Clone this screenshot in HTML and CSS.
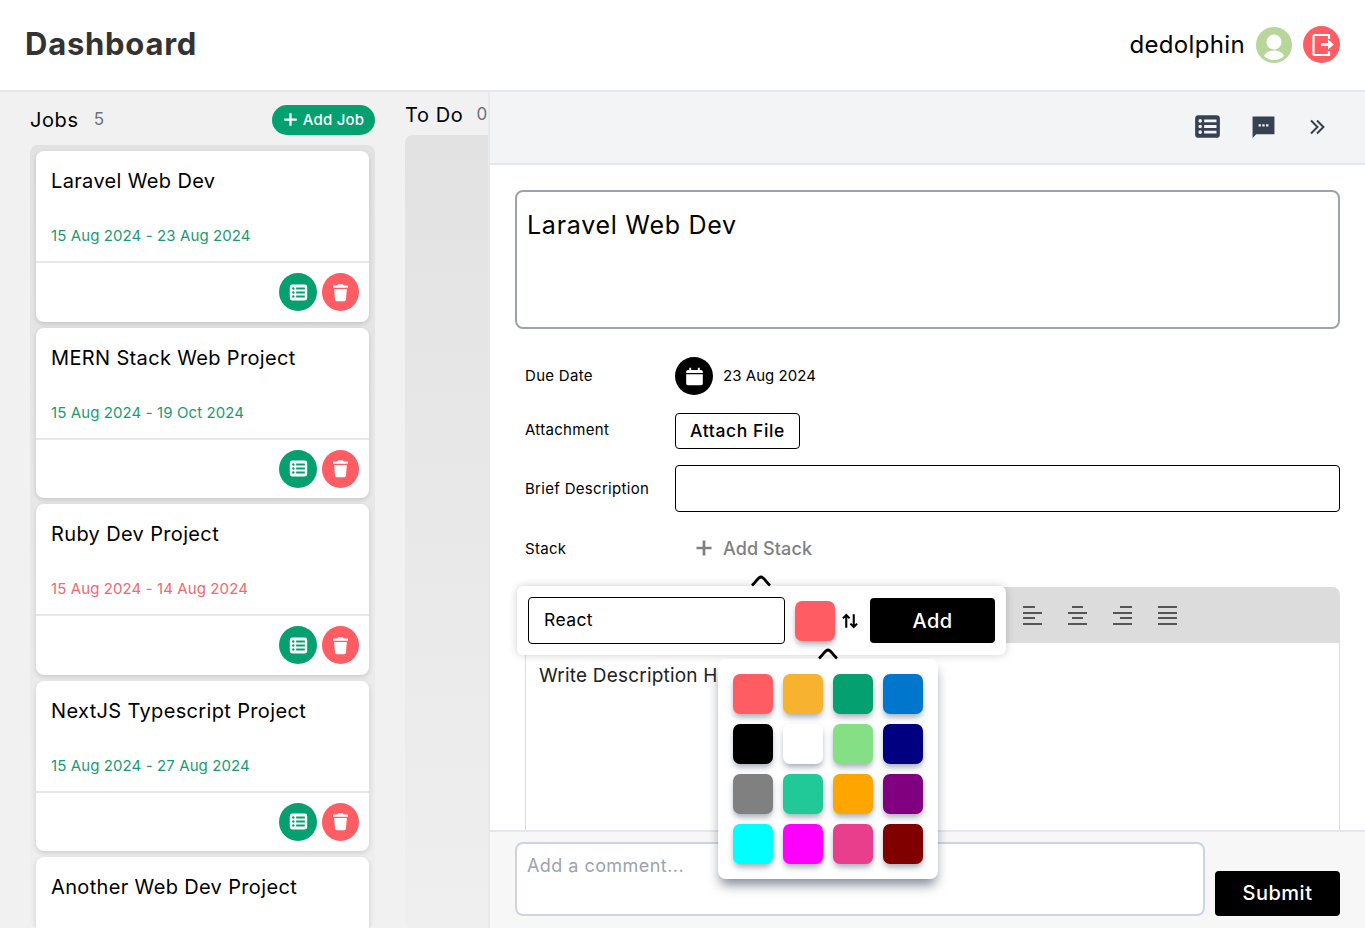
FILE: index.html
```html
<!doctype html>
<html>
  <head>
    <meta charset="utf-8">
    <title>Dashboard</title>
    <link rel="stylesheet" href="styles.css">
  </head>
  <body>
    <svg class="defs" width="0" height="0">
      <symbol id="i-list" viewBox="0 0 24 24">
        <path fill="currentColor" fill-rule="evenodd" d="M4 2h16a3 3 0 0 1 3 3v14a3 3 0 0 1-3 3H4a3 3 0 0 1-3-3V5a3 3 0 0 1 3-3z M3.900 7a1.600 1.600 0 1 0 3.200 0a1.600 1.600 0 1 0-3.200 0z M3.900 12a1.600 1.600 0 1 0 3.200 0a1.600 1.600 0 1 0-3.200 0z M3.900 17a1.600 1.600 0 1 0 3.200 0a1.600 1.600 0 1 0-3.200 0z M9 5.700h11v2.600H9z M9 10.700h11v2.600H9z M9 15.700h11v2.600H9z"/>
      </symbol>
      <symbol id="i-trash" viewBox="0 0 24 24">
        <path fill="currentColor" d="M9 1.500h6l1 1.800h5.500v2.700h-19V3.300H8z M4 7.500h16l-1.100 13.700a2 2 0 0 1-2 1.800H7.100a2 2 0 0 1-2-1.800z"/>
      </symbol>
      <symbol id="i-plus" viewBox="0 0 24 24">
        <path fill="currentColor" d="M10.200 2h3.600v8.200H22v3.600h-8.200V22h-3.600v-8.200H2v-3.600h8.200z"/>
      </symbol>
      <symbol id="i-swap" viewBox="0 0 24 24">
        <path fill="none" stroke="currentColor" stroke-width="2.800" d="M7 21V4 M2.500 8.500 7 4l4.500 4.500 M17 3v17 M12.500 15.500 17 20l4.500-4.500"/>
      </symbol>
      <symbol id="i-caret" viewBox="0 0 24 12">
        <path fill="none" stroke="#000" stroke-width="2.800" d="M3 10.500C8 6 9 2 12 2s4 4 9 8.500"/>
      </symbol>
    </svg>

    <div class="app">
      <div class="topbar">
        <div class="brand">Dashboard</div>
        <div class="user">
          <span class="user-name">dedolphin</span>
          <span class="avatar">
            <svg viewBox="0 0 36 36" width="36" height="36"><circle cx="18" cy="15" r="7.500" fill="#fff"/><path fill="#fff" d="M8 29c1.500-4 6-5.500 10-5.500s8.500 1.500 10 5.500c-2.500 2.500-6 4-10 4s-7.500-1.500-10-4z"/></svg>
          </span>
          <span class="logout">
            <svg viewBox="0 0 37 37" width="37" height="37"><path fill="none" stroke="#fff" stroke-width="2.200" d="M26 13V9H12a1.500 1.500 0 0 0-1.500 1.500v17a1.500 1.500 0 0 0 1.500 1.500h14v-4"/><path fill="#fff" d="M18 17h7v-3.500l6 5-6 5V20h-7z"/></svg>
          </span>
        </div>
      </div>

      <div class="main">
        <div class="board">
          <div class="column jobs">
            <div class="column-head">
              <span class="column-name">Jobs</span>
              <span class="column-count">5</span>
              <button class="add-job"><svg width="15" height="15"><use href="#i-plus"/></svg>Add Job</button>
            </div>
            <div class="card-list">
              <div class="card">
                <div class="card-top">
                  <div class="card-title">Laravel Web Dev</div>
                  <div class="card-date">15 Aug 2024 - 23 Aug 2024</div>
                </div>
                <div class="card-actions">
                  <span class="round green"><svg width="19" height="19"><use href="#i-list"/></svg></span>
                  <span class="round red"><svg width="19" height="19"><use href="#i-trash"/></svg></span>
                </div>
              </div>
              <div class="card">
                <div class="card-top">
                  <div class="card-title">MERN Stack Web Project</div>
                  <div class="card-date">15 Aug 2024 - 19 Oct 2024</div>
                </div>
                <div class="card-actions">
                  <span class="round green"><svg width="19" height="19"><use href="#i-list"/></svg></span>
                  <span class="round red"><svg width="19" height="19"><use href="#i-trash"/></svg></span>
                </div>
              </div>
              <div class="card">
                <div class="card-top">
                  <div class="card-title">Ruby Dev Project</div>
                  <div class="card-date late">15 Aug 2024 - 14 Aug 2024</div>
                </div>
                <div class="card-actions">
                  <span class="round green"><svg width="19" height="19"><use href="#i-list"/></svg></span>
                  <span class="round red"><svg width="19" height="19"><use href="#i-trash"/></svg></span>
                </div>
              </div>
              <div class="card">
                <div class="card-top">
                  <div class="card-title">NextJS Typescript Project</div>
                  <div class="card-date">15 Aug 2024 - 27 Aug 2024</div>
                </div>
                <div class="card-actions">
                  <span class="round green"><svg width="19" height="19"><use href="#i-list"/></svg></span>
                  <span class="round red"><svg width="19" height="19"><use href="#i-trash"/></svg></span>
                </div>
              </div>
              <div class="card">
                <div class="card-top">
                  <div class="card-title">Another Web Dev Project</div>
                </div>
              </div>
            </div>
          </div>
          <div class="column todo">
            <div class="column-head">
              <span class="column-name">To Do</span>
              <span class="column-count">0</span>
            </div>
            <div class="todo-list"></div>
          </div>
        </div>

        <div class="panel">
          <div class="panel-head">
            <svg class="tool" width="27" height="27"><use href="#i-list"/></svg>
            <svg class="tool" viewBox="0 0 24 24" width="25" height="25"><path fill="currentColor" fill-rule="evenodd" d="M1.500 2.500h21v17H5l-3.500 3.500z M7.300 9.800h2.200v2.200H7.300z M10.900 9.800h2.200v2.200h-2.200z M14.500 9.800h2.200v2.200h-2.200z"/></svg>
            <svg class="tool" viewBox="0 0 24 24" width="22" height="22"><path fill="none" stroke="currentColor" stroke-width="2.200" d="M5.500 5l7 7-7 7 M12 5l7 7-7 7"/></svg>
          </div>

          <div class="panel-body">
            <div class="title-box">Laravel Web Dev</div>
            <div class="field field-date">
              <div class="field-label">Due Date</div>
              <span class="round black">
                <svg viewBox="0 0 24 24" width="21" height="21"><path fill="#fff" d="M6 2h2.200v2.500h7.600V2H18v2.500h1.500a2 2 0 0 1 2 2V8h-19V6.500a2 2 0 0 1 2-2H6z M2.500 9.500h19V20a2 2 0 0 1-2 2h-15a2 2 0 0 1-2-2z"/></svg>
              </span>
              <span class="date-text">23 Aug 2024</span>
            </div>
            <div class="field field-attach">
              <div class="field-label">Attachment</div>
              <button class="attach">Attach File</button>
            </div>
            <div class="field field-brief">
              <div class="field-label">Brief Description</div>
              <div class="brief-input"></div>
            </div>
            <div class="field field-stack">
              <div class="field-label">Stack</div>
              <div class="add-stack"><svg width="18" height="18"><use href="#i-plus"/></svg>Add Stack</div>
            </div>
            <div class="editor">
              <div class="editor-tools">
                <svg class="align" width="20" height="20"><path d="M1 2h12M1 8h19M1 13h12M1 19h19"/></svg>
                <svg class="align" width="20" height="20"><path d="M5 2h11M1 8h19M5 13h11M1 19h19"/></svg>
                <svg class="align" width="20" height="20"><path d="M8 2h12M1 8h19M8 13h12M1 19h19"/></svg>
                <svg class="align" width="20" height="20"><path d="M1 2h19M1 8h19M1 13h19M1 19h19"/></svg>
              </div>
              <div class="editor-text">Write Description Here</div>
            </div>
          </div>

          <div class="comment-bar">
            <div class="comment-input">Add a comment...</div>
            <button class="submit">Submit</button>
          </div>

          <div class="stack-popup">
            <svg class="caret caret-stack" width="24" height="12"><use href="#i-caret"/></svg>
            <div class="stack-input">React</div>
            <span class="swatch picked"></span>
            <svg class="swap" width="18" height="18"><use href="#i-swap"/></svg>
            <button class="add">Add</button>
            <div class="color-popup">
              <svg class="caret caret-color" width="24" height="12"><use href="#i-caret"/></svg>
              <span class="swatch c1"></span>
              <span class="swatch c2"></span>
              <span class="swatch c3"></span>
              <span class="swatch c4"></span>
              <span class="swatch c5"></span>
              <span class="swatch c6"></span>
              <span class="swatch c7"></span>
              <span class="swatch c8"></span>
              <span class="swatch c9"></span>
              <span class="swatch c10"></span>
              <span class="swatch c11"></span>
              <span class="swatch c12"></span>
              <span class="swatch c13"></span>
              <span class="swatch c14"></span>
              <span class="swatch c15"></span>
              <span class="swatch c16"></span>
            </div>
          </div>
        </div>
      </div>
    </div>
  </body>
</html>
```

FILE: styles.css
```css
* {
  box-sizing: border-box;
}

body {
  margin: 0;
  background: #fff;
  color: #000;
  font-family: 'Inter', 'Open Sans', sans-serif;
}

button {
  font-family: inherit;
  border: 0;
  padding: 0;
}

.defs {
  position: absolute;
}

.app {
  height: 928px;
  display: flex;
  flex-direction: column;
}

/* top bar */

.topbar {
  height: 92px;
  flex: none;
  display: flex;
  align-items: center;
  justify-content: space-between;
  padding: 0 25px 1px;
  border-bottom: 2px solid #e5e7eb;
}

.brand {
  font-size: 31px;
  font-weight: 700;
  color: #333;
  letter-spacing: 0.75px;
  margin-bottom: 3px;
}

.user {
  display: flex;
  align-items: center;
}

.user-name {
  font-size: 24px;
  letter-spacing: 0.35px;
  margin-right: 11px;
}

.avatar,
.logout {
  border-radius: 50%;
  display: flex;
  align-items: center;
  justify-content: center;
}

.avatar {
  width: 36px;
  height: 36px;
  background: #b8d69c;
  margin-right: 11px;
}

.logout {
  width: 37px;
  height: 37px;
  background: #ff5c64;
}

/* board */

.main {
  flex: 1;
  min-height: 0;
  display: flex;
  overflow: hidden;
}

.board {
  width: 488px;
  flex: none;
  display: flex;
  background: #f1f1f1;
  padding-left: 30px;
  overflow: hidden;
}

.column {
  flex: none;
  display: flex;
  flex-direction: column;
}

.jobs {
  width: 345px;
}

.todo {
  width: 120px;
  margin-left: 30px;
}

.column-head {
  display: flex;
  align-items: center;
}

.jobs .column-head {
  height: 53px;
  padding-top: 2px;
}

.todo .column-head {
  height: 43px;
  padding-top: 3px;
}

.column-name {
  font-size: 20px;
  letter-spacing: 0.6px;
}

.column-count {
  margin-left: 15px;
  font-size: 17px;
  color: #6b7280;
  position: relative;
  top: -1px;
}

.todo .column-count {
  margin-left: 13px;
}

.add-job {
  margin-left: auto;
  width: 103px;
  height: 30px;
  border-radius: 15px;
  background: #05a06f;
  color: #fff;
  font-size: 15px;
  letter-spacing: 0.2px;
  font-weight: 500;
  display: flex;
  align-items: center;
  justify-content: center;
  gap: 5px;
}

.card-list {
  flex: 1;
  padding: 6px;
  border-radius: 8px;
  background: linear-gradient(#e2e2e2, #efefef);
  overflow: hidden;
}

.card {
  height: 170.500px;
  background: #fff;
  border-radius: 8px;
  box-shadow: 0 2px 5px rgba(0, 0, 0, 0.14);
  margin-bottom: 6px;
  display: flex;
  flex-direction: column;
}

.card-top {
  flex: none;
  height: 112px;
  padding: 17px 15px 0;
  border-bottom: 2px solid #e5e7eb;
}

.card-title {
  font-size: 20px;
  line-height: 26px;
  letter-spacing: 0.35px;
  height: 58px;
}

.card-date {
  font-size: 15px;
  line-height: 20px;
  color: #1a9a72;
  letter-spacing: 0.1px;
}

.card-date.late {
  color: #f0686e;
}

.card-actions {
  display: flex;
  justify-content: flex-end;
  gap: 5px;
  padding: 10px 10px 0;
}

.round {
  width: 38px;
  height: 38px;
  border-radius: 50%;
  color: #fff;
  flex: none;
  display: flex;
  align-items: center;
  justify-content: center;
}

.green {
  background: #05a06f;
}

.red {
  width: 37px;
  background: #ff5c64;
}

.black {
  background: #000;
}

.todo-list {
  flex: 1;
  border-radius: 8px;
  background: linear-gradient(#e2e2e2, #efefef);
}

/* side panel */

.panel {
  position: relative;
  flex: 1;
  display: flex;
  flex-direction: column;
  border-left: 2px solid #e9e9e9;
  background: #fff;
}

.panel-head {
  flex: none;
  height: 73px;
  display: flex;
  align-items: center;
  justify-content: flex-end;
  gap: 30px;
  padding: 0 37px 2px 0;
  background: #f3f4f6;
  border-bottom: 2px solid #e5e7eb;
  color: #374151;
}

.panel-body {
  flex: 1;
  min-height: 0;
  overflow: hidden;
  padding: 25px 25px 0;
}

.title-box {
  height: 139px;
  border: 2px solid #9ca3af;
  border-radius: 8px;
  padding: 16px 10px;
  font-size: 25px;
  line-height: 34px;
  letter-spacing: 0.73px;
}

.field {
  display: flex;
  align-items: center;
  padding-left: 10px;
}

.field-label {
  width: 150px;
  flex: none;
  font-size: 15px;
  line-height: 18px;
  letter-spacing: 0.3px;
}

.field-date {
  margin-top: 28px;
}

.date-text {
  margin-left: 10px;
  font-size: 15px;
  line-height: 18px;
  letter-spacing: 0.05px;
}

.field-attach {
  margin-top: 18px;
}

.field-attach .field-label {
  margin-top: -2px;
}

.attach {
  width: 125px;
  height: 36px;
  border: 1px solid #000;
  border-radius: 4px;
  background: #fff;
  color: #000;
  font-size: 17.500px;
  letter-spacing: 0.6px;
  font-weight: 500;
  padding-bottom: 2px;
}

.field-brief {
  margin-top: 16px;
}

.brief-input {
  flex: 1;
  height: 47px;
  border: 1px solid #000;
  border-radius: 4px;
}

.field-stack {
  margin-top: 23px;
  height: 28px;
}

.add-stack {
  display: flex;
  align-items: center;
  gap: 10px;
  padding: 0 0 2px 20px;
  font-size: 18px;
  letter-spacing: 0.1px;
  font-weight: 500;
  color: #808080;
}

.editor {
  margin: 24px 0 0 10px;
}

.editor-tools {
  height: 56px;
  background: #dcdcdc;
  border-radius: 8px 8px 0 0;
  display: flex;
  align-items: center;
  gap: 25px;
  padding-left: 497px;
}

.align {
  fill: none;
  stroke: #555;
  stroke-width: 2.200;
}

.editor-text {
  height: 300px;
  border: 1px solid #dcdcdc;
  border-top: 0;
  padding: 20px 13px;
  font-size: 19px;
  line-height: 26px;
  letter-spacing: 0.2px;
  color: #222;
}

.comment-bar {
  flex: none;
  height: 98px;
  display: flex;
  align-items: flex-end;
  gap: 10px;
  padding: 0 25px 12px;
  background: #f7f7f7;
  border-top: 2px solid #e5e7eb;
}

.comment-input {
  flex: 1;
  height: 74px;
  padding: 10px;
  background: #fff;
  border: 2px solid #cbd5e1;
  border-radius: 8px;
  font-size: 18px;
  letter-spacing: 0.45px;
  line-height: 24px;
  color: #9ca3af;
}

.submit {
  width: 125px;
  height: 45px;
  background: #000;
  color: #fff;
  border-radius: 4px;
  font-size: 20px;
  letter-spacing: 0.5px;
  font-weight: 500;
  padding-bottom: 2px;
}

/* popovers */

.stack-popup {
  position: absolute;
  left: 27px;
  top: 494px;
  width: 489px;
  height: 69px;
  background: #fff;
  border-radius: 6px;
  box-shadow: 0 0 8px rgba(0, 0, 0, 0.2);
  display: flex;
  align-items: center;
  padding: 0 11px;
  z-index: 5;
}

.caret {
  position: absolute;
  color: #000;
}

.caret-stack {
  left: 232px;
  top: -11px;
}

.caret-color {
  left: 98px;
  top: -11px;
}

.stack-input {
  width: 257px;
  height: 47px;
  border: 1px solid #000;
  border-radius: 4px;
  padding: 0 15px;
  font-size: 17.500px;
  letter-spacing: 0.4px;
  line-height: 43px;
}

.swatch {
  width: 40px;
  height: 40px;
  border-radius: 7px;
  box-shadow: 0 4px 6px -1px rgba(71, 85, 105, 0.5);
}

.picked {
  margin-left: 10px;
  background: #ff5c64;
}

.swap {
  margin: 0 3px 0 6px;
}

.add {
  margin-left: auto;
  width: 125px;
  height: 45px;
  background: #000;
  color: #fff;
  border-radius: 4px;
  font-size: 20px;
  letter-spacing: 0.4px;
  font-weight: 500;
}

.color-popup {
  position: absolute;
  left: 201px;
  top: 73px;
  width: 220px;
  height: 220px;
  padding: 15px;
  background: #fff;
  border-radius: 8px;
  box-shadow: 0 8px 12px -2px rgba(51, 65, 85, 0.6);
  display: grid;
  grid-template-columns: repeat(4, 40px);
  grid-auto-rows: 40px;
  gap: 10px;
}

.c1 { background: #ff5c64; }
.c2 { background: #f7b22f; }
.c3 { background: #05a06f; }
.c4 { background: #0077cc; }
.c5 { background: #000; }
.c6 { background: #fff; }
.c7 { background: #85e085; }
.c8 { background: #000080; }
.c9 { background: #808080; }
.c10 { background: #20c997; }
.c11 { background: #ffa500; }
.c12 { background: #800080; }
.c13 { background: #00ffff; }
.c14 { background: #ff00ff; }
.c15 { background: #e83e8c; }
.c16 { background: #800000; }
```
